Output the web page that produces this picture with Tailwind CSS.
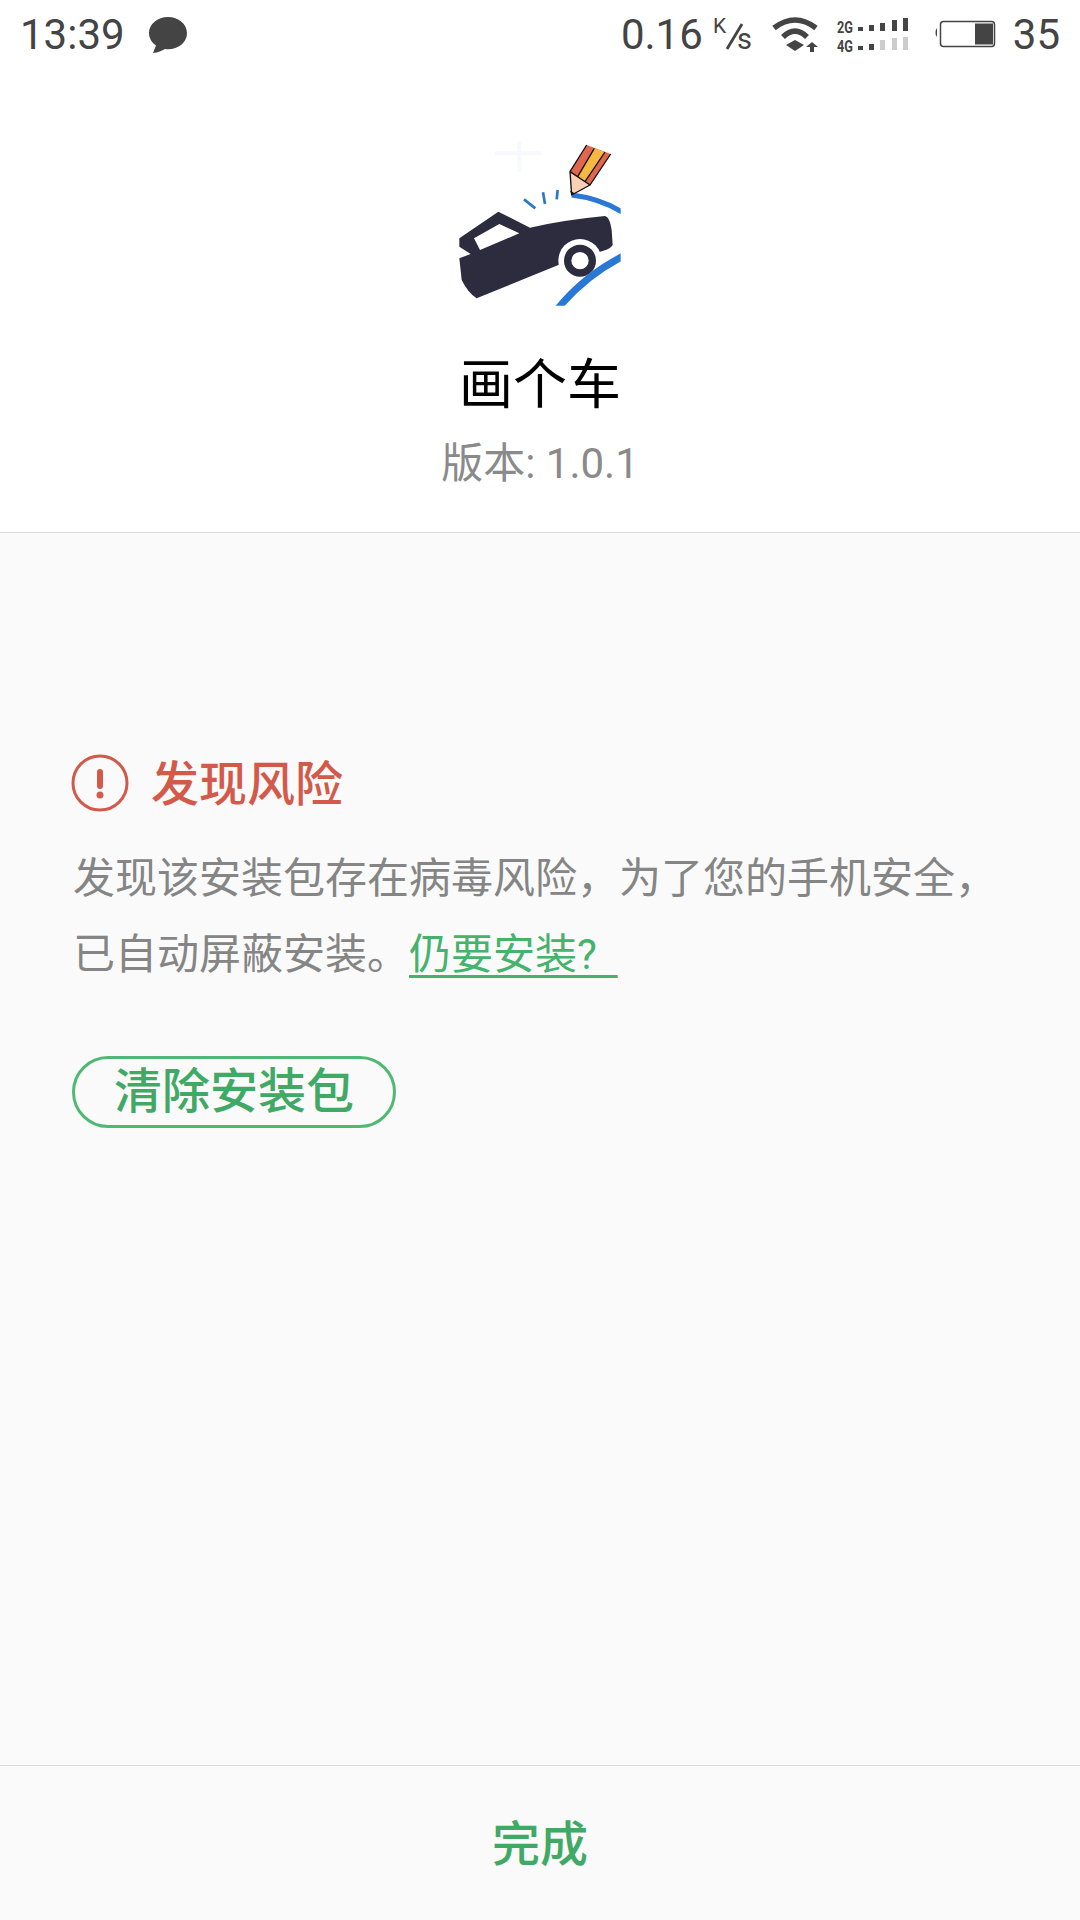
<!DOCTYPE html>
<html lang="zh">
<head>
<meta charset="utf-8">
<script src="https://cdn.jsdelivr.net/npm/@tailwindcss/browser@4"></script>
</head>
<body class="m-0">
<div class="w-[1080px] h-[1920px] flex flex-col bg-[#fafafa] font-['Roboto','Noto_Sans_CJK_SC',sans-serif] overflow-hidden">
  <header class="h-[533px] shrink-0 bg-white border-b border-[#d9d9d9] flex flex-col items-center">
    <div class="w-full h-[68px] pt-[2px] flex items-center justify-between pl-[20px] pr-[20px] text-[#444444] text-[42px] leading-none">
      <div class="flex items-center gap-[23px]">
        <span>13:39</span>
        <svg class="w-[40px] h-[40px] -mt-[1px]" viewBox="0 0 40 40"><path d="M20 2C9.500 2 1 9 1 18c0 5 2.500 9.500 7 12.500L5 38c5-.5 9-2.500 12-4 1 .2 2 .2 3 .2 10.500 0 19-7 19-16S30.500 2 20 2z" fill="#444444"/></svg>
      </div>
      <div class="flex items-center">
        <span>0.16</span>
        <svg class="w-[42px] h-[44px] ml-[10px]" viewBox="0 0 42 44"><text x="0" y="20" font-family="Roboto" font-size="21" fill="#444444">K</text><path d="M14 36L29 11" stroke="#444444" stroke-width="2.800"/><text x="24" y="36" font-family="Roboto" font-size="29" fill="#444444">s</text></svg>
        <svg class="w-[48px] h-[36px] ml-[17px]" viewBox="0 0 48 36"><path d="M2 11Q23 -5 44 11" fill="none" stroke="#444444" stroke-width="5.500"/><path d="M11 20Q23 8 35 20" fill="none" stroke="#444444" stroke-width="5.500"/><path d="M14 28L23 23L32 28L23 34Z" fill="#444444"/><path d="M40 25L46 30H42V35H38V30H34Z" fill="#444444"/></svg>
        <svg class="w-[76px] h-[40px] ml-[17px]" viewBox="0 0 76 40"><text x="0" y="18" font-family="Roboto" font-size="17" font-weight="700" fill="#444444" textLength="16" lengthAdjust="spacingAndGlyphs">2G</text><text x="0" y="37" font-family="Roboto" font-size="17" font-weight="700" fill="#444444" textLength="16" lengthAdjust="spacingAndGlyphs">4G</text><g fill="#444444"><rect x="21" y="12" width="5" height="4"/><rect x="32" y="10" width="5" height="6"/><rect x="43" y="8" width="5" height="8"/><rect x="55" y="5" width="5" height="11"/><rect x="66" y="3" width="5" height="13"/><rect x="21" y="31" width="5" height="4"/><rect x="32" y="29" width="5" height="6"/></g><g fill="#cccccc"><rect x="43" y="25" width="5" height="10"/><rect x="55" y="23" width="5" height="12"/><rect x="66" y="22" width="5" height="13"/></g></svg>
        <svg class="w-[62px] h-[30px] ml-[21px]" viewBox="0 0 62 30"><path d="M3 8C1 10 1 15 3 17Z" fill="#444444"/><rect x="6.500" y="1.500" width="54" height="25" rx="3" fill="none" stroke="#444444" stroke-width="1.500"/><rect x="41" y="3.500" width="18" height="21" fill="#444444"/></svg>
        <span class="ml-[17px]">35</span>
      </div>
    </div>
    <svg class="w-[220px] h-[180px] mt-[62px] shrink-0" viewBox="0 0 660 540">
      <path d="M195 70H335M268 35V125" stroke="#f6f9fd" stroke-width="12"/>
      <path d="M88 325L205 245L300 293Q400 270 525 258Q540 262 545 300L548 345Q540 358 520 362L385 405L140 505Q115 490 95 450L88 385L122 372L88 350Z" fill="#2c2c3e"/>
      <path d="M132 325L208 282L268 310L150 360Z" fill="#ffffff"/>
      <circle cx="450" cy="392" r="65" fill="#ffffff"/>
      <circle cx="450" cy="392" r="37" fill="none" stroke="#2c2c3e" stroke-width="22"/>
      <svg x="0" y="0" width="572" height="527" viewBox="0 0 572 527">
        <path d="M425 195Q510 205 580 248" fill="none" stroke="#2a78d6" stroke-width="15"/>
        <path d="M380 540Q460 440 580 378" fill="none" stroke="#2a78d6" stroke-width="21"/>
      </svg>
      <path d="M282 208L316 235M339 187L345 222M383 180L380 208" stroke="#2a78c6" stroke-width="8"/>
      <path d="M420 125L470 45L542 72L480 165Z" fill="#e0674e"/>
      <path d="M443 140L493 55L525 66L465 155Z" fill="#f5b942"/>
      <path d="M425 195L420 125L480 165Z" fill="#fbd0b5" stroke="#111111" stroke-width="4" stroke-linejoin="round"/>
      <path d="M420 125L470 45M443 140L493 55M465 155L525 66M480 165L542 72" stroke="#111111" stroke-width="4"/>
      <path d="M425 195L420 182L434 190Z" fill="#111111"/>
    </svg>
    <h1 class="text-[54px] leading-none font-normal text-black mt-[49px]">画个车</h1>
    <p class="text-[42px] leading-none text-[#8a8a8a] mt-[30px]">版本: 1.0.1</p>
  </header>
  <main class="flex-1 px-[73px] pt-[220px]">
    <div class="flex items-center gap-[22px] h-[60px] -ml-[2px]">
      <svg class="w-[58px] h-[58px] shrink-0" viewBox="0 0 58 58"><circle cx="29" cy="29" r="27" fill="none" stroke="#d35a4a" stroke-width="3"/><rect x="26" y="15" width="6" height="20" rx="3" fill="#d35a4a"/><circle cx="29" cy="41" r="3.500" fill="#d35a4a"/></svg>
      <h2 class="text-[48px] leading-none font-medium text-[#d35a4a] mt-[4px]">发现风险</h2>
    </div>
    <p class="text-[42px] leading-[76px] text-[#858585] mt-[28px] w-[950px]">发现该安装包存在病毒风险，为了您的手机安全，<br>已自动屏蔽安装。<a class="text-[#45b36b] underline underline-offset-[6px] decoration-[3px] whitespace-pre">仍要安装?&nbsp;&nbsp;</a></p>
    <button class="mt-[63px] -ml-[1px] w-[324px] h-[72px] rounded-full border-[3px] border-[#4fb974] text-[48px] leading-none font-medium text-[#41a966] flex items-center justify-center">清除安装包</button>
  </main>
  <footer class="h-[155px] shrink-0 border-t border-[#d9d9d9] flex items-center justify-center">
    <span class="text-[48px] leading-none font-medium text-[#41a966] mt-[4px]">完成</span>
  </footer>
</div>
</body>
</html>
